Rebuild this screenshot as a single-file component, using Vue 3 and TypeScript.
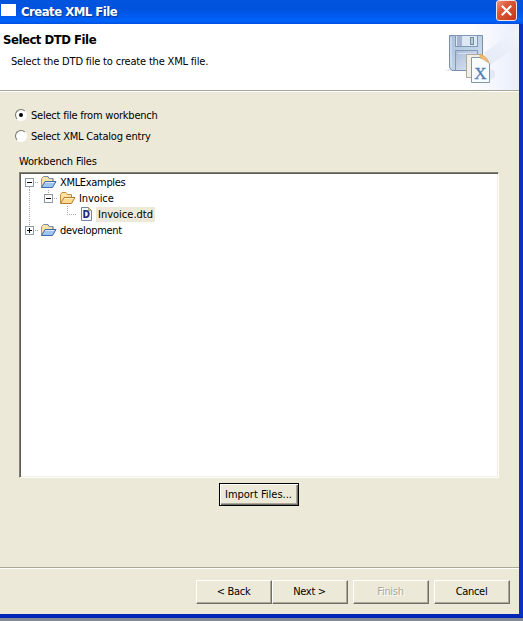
<script setup lang="ts">
import { ref } from 'vue'

interface TreeNode {
  label: string
  depth: number
  icon: 'project' | 'folder' | 'dtd'
  expander: '' | 'minus' | 'plus'
}

const source = ref<'workbench' | 'catalog'>('workbench')
const selected = ref('Invoice.dtd')

const nodes: TreeNode[] = [
  { label: 'XMLExamples', depth: 0, icon: 'project', expander: 'minus' },
  { label: 'Invoice', depth: 1, icon: 'folder', expander: 'minus' },
  { label: 'Invoice.dtd', depth: 2, icon: 'dtd', expander: '' },
  { label: 'development', depth: 0, icon: 'project', expander: 'plus' },
]
</script>

<template>
  <div class="screen">
    <div class="window">
      <header class="titlebar">
        <span class="app-icon"></span>
        <h1 class="window-title">Create XML File</h1>
        <button class="close" aria-label="Close">
          <svg width="21" height="21" viewBox="0 0 21 21">
            <defs>
              <linearGradient id="red" x1="0" y1="0" x2="1" y2="1">
                <stop offset="0" stop-color="#ee9a80" />
                <stop offset=".35" stop-color="#dc5b3c" />
                <stop offset="1" stop-color="#c03412" />
              </linearGradient>
            </defs>
            <rect x=".5" y=".5" width="20" height="20" rx="2.5" fill="url(#red)" stroke="#f4e4e4" />
            <path d="M5.800 5.800l9.400 9.400M15.200 5.800l-9.400 9.400" stroke="#fff" stroke-width="2.1" />
          </svg>
        </button>
      </header>

      <section class="banner">
        <div>
          <h2 class="banner-title">Select DTD File</h2>
          <p class="banner-text">Select the DTD file to create the XML file.</p>
        </div>
        <svg class="banner-art" width="79" height="66" viewBox="0 0 79 66">
          <defs>
            <linearGradient id="haze" x1="0" y1="0" x2="1" y2="0">
              <stop offset=".35" stop-color="#fff" />
              <stop offset="1" stop-color="#e9eefb" />
            </linearGradient>
            <linearGradient id="beam" x1="0" y1="1" x2="1" y2="0">
              <stop offset="0" stop-color="#dbe3f4" />
              <stop offset="1" stop-color="#f4f7fd" />
            </linearGradient>
            <linearGradient id="disk" x1="0" y1="0" x2="1" y2="1">
              <stop offset="0" stop-color="#a9bfdc" />
              <stop offset="1" stop-color="#d3e4ef" />
            </linearGradient>
            <linearGradient id="label" x1="0" y1="0" x2="1" y2="1">
              <stop offset="0" stop-color="#aabbd9" />
              <stop offset="1" stop-color="#e0e9f4" />
            </linearGradient>
          </defs>
          <rect width="79" height="66" fill="url(#haze)" />
          <path d="M44 29L79 3v18L50 41z" fill="url(#beam)" opacity=".7" />
          <path d="M5 47l6-3h18v3zM48 57l7-4v-6l-6-2z" fill="#e3e8f4" />
          <path d="M9.500 11.500h33v35H12l-2.500-3z" fill="url(#disk)" stroke="#7890ad" />
          <path d="M11 13v30" stroke="#e0ebf5" />
          <rect x="15.500" y="11.500" width="22" height="11" fill="#dce8f3" stroke="#8198b6" />
          <rect x="17" y="12" width="5" height="10" fill="#a5b5d2" />
          <rect x="30.500" y="13.500" width="3" height="7" fill="#b9cbd5" stroke="#718c9b" />
          <path d="M15.500 46V26.500h22V46" fill="url(#label)" stroke="#8399b9" />
          <path d="M18 29.500h18" stroke="#d4dfed" />
          <path d="M26.500 30.500h14l3 3v20h-17z" fill="#f4efe4" stroke="#aaa89f" />
          <path d="M31.500 33.500h12l6 6v19h-18z" fill="#f8fbff" stroke="#8196ad" />
          <path d="M40 30q7 2 9 9l-6-4-3-1z" fill="#efbd76" stroke="#d5a65f" stroke-width=".8" />
          <text x="34.300" y="54.500" class="x-mark">X</text>
        </svg>
      </section>

      <main class="content">
        <label class="radio">
          <input v-model="source" type="radio" value="workbench" />
          <span class="dial"></span><span>Select file from workbench</span>
        </label>
        <label class="radio">
          <input v-model="source" type="radio" value="catalog" />
          <span class="dial"></span><span>Select XML Catalog entry</span>
        </label>
        <div class="caption">Workbench Files</div>

        <div class="tree">
          <div v-for="n in nodes" :key="n.label" class="row" @click="selected = n.label">
            <span v-if="n.depth > 0" class="rail"></span>
            <span v-if="n.depth > 1" class="gap"></span>
            <svg class="twisty" width="19" height="16" viewBox="0 0 19 16">
              <path v-if="n.label === 'XMLExamples'" d="M9.500 13v3" class="dots" />
              <path v-if="n.label === 'Invoice'" d="M9.500 0v3" class="dots" />
              <path v-if="n.icon === 'dtd'" d="M9.500 0v8.500H19" class="dots" />
              <path v-if="n.expander === 'plus'" d="M9.500 0v3" class="dots" />
              <template v-if="n.expander">
                <path d="M15 8.500h4" class="dots" />
                <rect x="5.500" y="4.500" width="8" height="8" fill="#fff" stroke="#8d99a5" />
                <path d="M7 8.500h5" stroke="#000" />
                <path v-if="n.expander === 'plus'" d="M9.500 6v5" stroke="#000" />
              </template>
            </svg>
            <svg v-if="n.icon === 'project'" class="icon" width="17" height="16" viewBox="0 0 17 16">
              <path d="M1.500 13V4.500l2-2h4l1.500 2h4V8" fill="#f9e4a8" stroke="#c39248" />
              <path d="M4 2.500h4l1 2h4V8" fill="none" stroke="#708dc0" />
              <path d="M1.500 13.500l3.500-6h11l-3.500 6z" fill="#9fc4f0" stroke="#3e69ad" />
              <path d="M5.500 8.500h8.500" stroke="#dceafb" />
            </svg>
            <svg v-else-if="n.icon === 'folder'" class="icon" width="17" height="16" viewBox="0 0 17 16">
              <path d="M1.500 13V4.500l1.500-2h4l1.500 2h4V8" fill="#fbe2a2" stroke="#c58d3d" />
              <path d="M1.500 13.500l3.500-6h11l-3.500 6z" fill="#fbd98d" stroke="#b97c30" />
              <path d="M5.500 8.500h8.500" stroke="#fff0c6" />
            </svg>
            <svg v-else class="icon" width="17" height="16" viewBox="0 0 17 16">
              <path d="M3.500 1.500h7l3 3v10h-10z" fill="#f4f9ff" stroke="#7285a4" />
              <path d="M10.500 1.500v3h3z" fill="#ead092" stroke="#b9a070" />
              <text x="4.600" y="12.300" class="d-mark">D</text>
            </svg>
            <span class="name" :class="[{ chosen: selected === n.label }, n.icon]">{{ n.label }}</span>
          </div>
        </div>

        <button class="btn import"><span>Import Files...</span></button>
      </main>

      <footer class="actions">
        <button class="btn">&lt; Back</button>
        <button class="btn next">Next &gt;</button>
        <button class="btn" disabled>Finish</button>
        <button class="btn">Cancel</button>
      </footer>
    </div>
  </div>
</template>

<style>
body {
  background: #858a94;
}
</style>

<style scoped>
.screen {
  width: 523px;
  height: 621px;
  overflow: hidden;
  box-sizing: border-box;
  padding-bottom: 3px;
  background: #858a94;
  font: 11px/13px "DejaVu Sans Condensed", Tahoma, "DejaVu Sans", sans-serif;
  letter-spacing: -0.3px;
  color: #000;
}
.window {
  box-sizing: border-box;
  width: 523px;
  height: 618px;
  display: flex;
  flex-direction: column;
  background: #ece9d8;
  border-right: 4px solid #0a30c4;
  border-bottom: 4px solid #0026b8;
}
.titlebar {
  flex: none;
  height: 24px;
  width: 523px;
  display: flex;
  align-items: center;
  background: linear-gradient(#0054de 0, #0052dc 35%, #005bf0 65%, #0062fa 88%, #0050dd 100%);
}
.app-icon {
  width: 15px;
  height: 12px;
  margin: 0 5px 4px 1px;
  background: #fff;
}
.window-title {
  flex: 1;
  margin: 0 0 1px;
  font: bold 13px/18px "DejaVu Sans Condensed", "Noto Sans", sans-serif;
  letter-spacing: -0.52px;
  color: #fff;
  text-shadow: 1px 1px 1px #00308f;
}
.close {
  width: 21px;
  height: 21px;
  margin: 0 6px 3px 0;
  padding: 0;
  border: 0;
  background: none;
}
.close svg {
  display: block;
}
.banner {
  flex: none;
  height: 66px;
  display: flex;
  justify-content: space-between;
  background: #fff;
  border-bottom: 1px solid #aca899;
  box-shadow: 0 1px #fff;
}
.banner-title {
  margin: 8px 0 0 3px;
  font-size: 13px;
  line-height: 16px;
  letter-spacing: -0.48px;
}
.banner-text {
  margin: 7px 0 0 11px;
  letter-spacing: -0.18px;
}
.x-mark {
  font: 17px "Liberation Serif", serif;
  fill: #507fb5;
  stroke: #507fb5;
  stroke-width: 0.3px;
}
.content {
  flex: 1;
  display: flex;
  flex-direction: column;
  align-items: flex-start;
  padding: 14px 21px 0 15px;
}
.radio {
  display: flex;
  align-items: center;
  height: 21px;
  letter-spacing: -0.22px;
}
.radio input {
  appearance: none;
  width: 0;
  height: 0;
  margin: 0;
}
.dial {
  box-sizing: border-box;
  width: 12px;
  height: 12px;
  margin: -2px 4px 0 0;
  border-radius: 50%;
  border: 1px solid;
  border-color: #777467 #fff #fff #777467;
  background: #fff;
  display: grid;
  place-items: center;
}
.radio input:checked + .dial::after {
  content: "";
  width: 4px;
  height: 4px;
  border-radius: 50%;
  background: #000;
}
.caption {
  margin: 8px 0 4px 4px;
  letter-spacing: -0.16px;
}
.tree {
  box-sizing: border-box;
  width: 480px;
  height: 306px;
  margin-left: 4px;
  border: 1px solid;
  border-color: #827f73 #fff #fff #827f73;
  box-shadow: inset 1px 1px #5f5d55, inset -1px -1px #f1efe2;
  background: #fff;
  padding: 1px 0 0 1px;
}
.row {
  display: flex;
  align-items: center;
  height: 16px;
}
.rail {
  width: 19px;
  height: 16px;
  background: linear-gradient(#aaa 50%, transparent 50%) 8px 0 / 1px 2px repeat-y;
}
.gap {
  width: 19px;
}
.twisty,
.icon {
  flex: none;
  margin-left: -1px;
}
.twisty {
  margin-right: 2px;
}
.dots {
  fill: none;
  stroke: #a5a5a5;
  stroke-dasharray: 1 1;
}
.d-mark {
  font: bold 10px "DejaVu Sans Condensed", sans-serif;
  fill: #1b2780;
}
.name {
  height: 15px;
  line-height: 15px;
  padding: 0 2px;
  margin-left: 1px;
}
.name.project {
  letter-spacing: -0.32px;
}
.name.folder {
  letter-spacing: -0.1px;
}
.name.dtd {
  letter-spacing: 0;
}
.chosen {
  background: #ece9d8;
}
.btn {
  box-sizing: border-box;
  width: 76px;
  height: 24px;
  padding: 0 1px 1px 0;
  font: inherit;
  letter-spacing: inherit;
  color: #000;
  background: #ece9d8;
  border: 1px solid;
  border-color: #fff #716f64 #716f64 #fff;
  box-shadow: inset -1px -1px #aca899;
}
.btn:disabled {
  color: #aca899;
  text-shadow: 1px 1px #fff;
}
.import {
  width: 80px;
  height: 23px;
  margin: 5px 0 0 204px;
  padding: 0 1px 1px 0;
  letter-spacing: 0;
  border: 1px solid #000;
  box-shadow: inset 1px 1px #fff, inset -1px -1px #716f64, inset -2px -2px #aca899;
}
.actions {
  flex: none;
  height: 46px;
  border-top: 1px solid #aca899;
  box-shadow: inset 0 1px #fff;
  display: flex;
  justify-content: flex-end;
  align-items: flex-start;
  padding-right: 9px;
}
.actions .btn {
  margin-top: 12px;
}
.next {
  margin-right: 5px;
}
.actions .btn:disabled {
  margin-right: 5px;
}
</style>
